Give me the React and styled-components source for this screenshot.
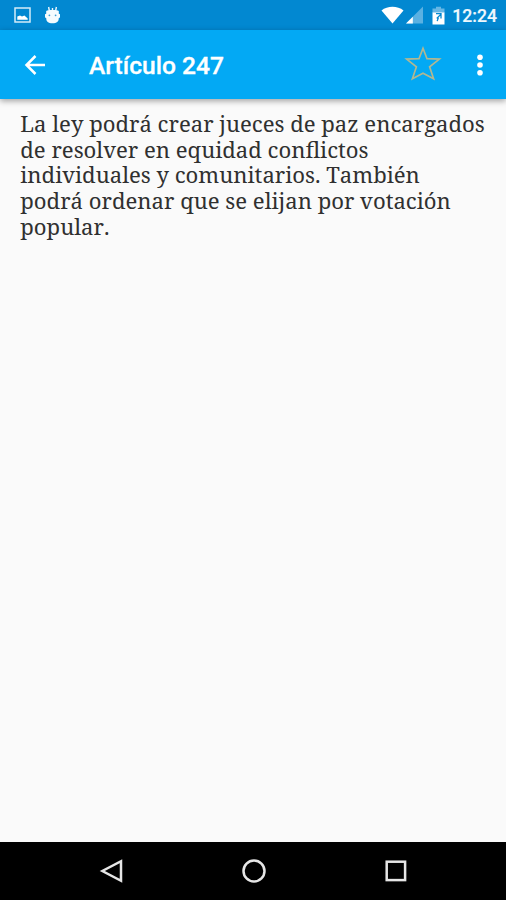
import React from 'react';
import styled, { createGlobalStyle } from 'styled-components';

const GlobalStyle = createGlobalStyle`
  * { box-sizing: border-box; }
  body { margin: 0; background: #fafafa; overflow: hidden; }
`;

const Screen = styled.div`
  display: flex;
  flex-direction: column;
  width: 506px;
  height: 900px;
  background: #fafafa;
  font-family: Roboto, sans-serif;
`;

const StatusBar = styled.header`
  display: flex;
  align-items: center;
  justify-content: space-between;
  flex: none;
  height: 30px;
  padding: 0 9px 0 14px;
  background: #0288d1;
`;

const StatusGroup = styled.div`
  display: flex;
  align-items: center;
  height: 30px;
  gap: ${({ $gap }) => $gap}px;
`;

const Clock = styled.time`
  margin-left: 4px;
  padding-top: 2px;
  color: #eff8fd;
  font-size: 17.6px;
  font-weight: 500;
  -webkit-text-stroke: 0.2px #eff8fd;
  line-height: 28px;
`;

const Toolbar = styled.nav`
  display: flex;
  align-items: center;
  flex: none;
  height: 69px;
  padding: 0 2px 0 23px;
  background: #03a9f4;
  box-shadow: 0 2px 6px rgba(0, 0, 0, 0.36);
`;

const IconButton = styled.button`
  display: flex;
  flex: none;
  align-items: center;
  justify-content: center;
  width: ${({ $width }) => $width}px;
  height: 48px;
  padding: 0;
  border: 0;
  background: none;
`;

const Title = styled.h1`
  flex: 1;
  margin: 2px 0 0 42px;
  color: #fff;
  font-size: 24.6px;
  font-weight: 500;
  -webkit-text-stroke: 0.3px #fff;
  line-height: 30px;
  white-space: nowrap;
`;

const Article = styled.main`
  flex: 1;
  padding: 12px 0 0 20.3px;
`;

const Paragraph = styled.p`
  margin: 0;
  color: #303030;
  font-family: "Noto Serif", "DejaVu Serif", serif;
  font-size: 22.1px;
  font-weight: 400;
  font-kerning: none;
  line-height: 25.7px;
  white-space: pre-line;
`;

const NavigationBar = styled.footer`
  display: grid;
  grid-template-columns: repeat(3, 142px);
  flex: none;
  height: 58px;
  padding: 5px 0 5px 41px;
  background: #000;
`;

const articleText = `La ley podrá crear jueces de paz encargados
de resolver en equidad conflictos
individuales y comunitarios. También
podrá ordenar que se elijan por votación
popular.`;

const PictureIcon = () => (
  <svg width="17" height="16" viewBox="0 0 17 16">
    <rect x="1" y="1" width="15" height="14" fill="none" stroke="#d5ebf8" strokeWidth="1.5" />
    <path d="M3.3 12.8V9.4l2.7-1 2 1.2 2.4-1 3.3 2.9v1.3z" fill="#fff" />
  </svg>
);

const AndroidIcon = () => (
  <svg width="17" height="19" viewBox="0 0 17 19">
    <path d="M4.6 1l.8 4M12.4 1l-.8 4M8.5 2v2.6" stroke="#eef8fd" strokeWidth="1.4" />
    <path d="M2.2 5C4 3.8 13 3.8 14.8 5v2.8l1.2.5v3.2l-1.2.5c0 3.8-2 5.2-6.3 5.2S2.2 15.8 2.2 12L1 11.5V8.3l1.2-.5z" fill="#f4fbfe" />
    <circle cx="5.4" cy="9.3" r=".9" fill="#3d9fd8" />
    <circle cx="11.6" cy="9.3" r=".9" fill="#3d9fd8" />
  </svg>
);

const WifiIcon = () => (
  <svg width="23" height="18" viewBox="0 0 23 18">
    <path d="M.5 4.4C6.5-.4 16.5-.4 22.5 4.4L11.5 17.6z" fill="#fff" />
  </svg>
);

const SignalIcon = () => (
  <svg width="17" height="18" viewBox="0 0 17 18">
    <path d="M17 .5V17.5H0z" fill="#5bb1e2" />
    <path d="M6.8 10.7v6.8H0z" fill="#fff" />
  </svg>
);

const BatteryIcon = () => (
  <svg width="13" height="19" viewBox="0 0 13 19">
    <path d="M4 .8h5v1.8h3.5V7H.5V2.6H4z" fill="#67b7e5" />
    <path d="M.5 6.5h12v12H.5z" fill="#fff" />
    <path d="M4 7.6h5v4.8M9 8.2l-4.3 4.2M6.4 11.5l-1.2 3.6" fill="none" stroke="#0288d1" strokeWidth="1.3" />
  </svg>
);

const BackIcon = () => (
  <svg width="24" height="24" viewBox="0 0 24 24">
    <path d="M22 12H4M12.5 3L3.5 12l9 9" fill="none" stroke="#fff" strokeWidth="2.5" />
  </svg>
);

const StarIcon = () => (
  <svg width="38" height="38" viewBox="0 0 38 38">
    <path d="M19 2.3l4 10.4 12.4.4-9.8 7.7 4 12L19 27.2 8.4 32.8l4-12-9.8-7.7 12.4-.4z" fill="none" stroke="#b0b792" strokeWidth="1.7" />
  </svg>
);

const MoreIcon = () => (
  <svg width="8" height="24" viewBox="0 0 8 24">
    {[4.3, 12, 19.7].map((y) => <circle key={y} cx="4" cy={y} r="2.8" fill="#fff" />)}
  </svg>
);

const NavIcon = ({ children }) => (
  <svg width="26" height="26" viewBox="0 0 26 26" fill="none" stroke="#e6e6e6" strokeWidth="2.5">
    {children}
  </svg>
);

export default function App() {
  return (
    <>
      <GlobalStyle />
      <Screen>
        <StatusBar>
          <StatusGroup $gap={13}>
            <PictureIcon />
            <AndroidIcon />
          </StatusGroup>
          <StatusGroup $gap={9}>
            <StatusGroup $gap={2}>
              <WifiIcon />
              <SignalIcon />
            </StatusGroup>
            <StatusGroup $gap={3}>
              <BatteryIcon />
              <Clock>12:24</Clock>
            </StatusGroup>
          </StatusGroup>
        </StatusBar>
        <Toolbar>
          <IconButton $width={24} aria-label="Atrás"><BackIcon /></IconButton>
          <Title>Artículo 247</Title>
          <IconButton $width={64} aria-label="Favorito"><StarIcon /></IconButton>
          <IconButton $width={49} aria-label="Más opciones"><MoreIcon /></IconButton>
        </Toolbar>
        <Article>
          <Paragraph>{articleText}</Paragraph>
        </Article>
        <NavigationBar>
          <IconButton $width={142} aria-label="Volver">
            <NavIcon><path d="M22 3.2v19.6L3.4 13z" /></NavIcon>
          </IconButton>
          <IconButton $width={142} aria-label="Inicio">
            <NavIcon><circle cx="13" cy="13" r="10.5" /></NavIcon>
          </IconButton>
          <IconButton $width={142} aria-label="Recientes">
            <NavIcon><rect x="3.7" y="3.7" width="18.4" height="18.4" /></NavIcon>
          </IconButton>
        </NavigationBar>
      </Screen>
    </>
  );
}
